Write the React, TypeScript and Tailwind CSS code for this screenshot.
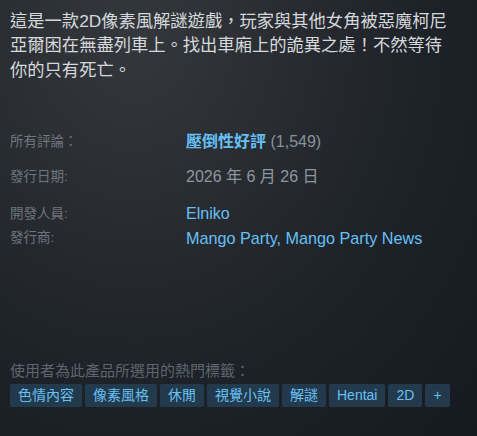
import React from "react";

const FONT = '"Liberation Sans", Arial, "Noto Sans CJK TC", sans-serif';

const tags = ["色情內容", "像素風格", "休閒", "視覺小說", "解謎", "Hentai", "2D", "+"];

export default function App() {
  return (
    <div
      className="w-[477px] h-[436px] overflow-hidden pl-[10px] bg-[radial-gradient(ellipse_at_28%_8%,#34383d_0%,#2a2e33_28%,#1d2128_62%,#151a21_100%)]"
      style={{ fontFamily: FONT }}
    >
      <div className="w-[443px] h-[83px] pt-[9px] text-[17.3px] leading-[24.4px] text-[#d6d9dc]">
        這是一款2D像素風解謎遊戲，玩家與其他女角被惡魔柯尼亞爾困在無盡列車上。找出車廂上的詭異之處！不然等待你的只有死亡。
      </div>

      <div className="mt-[49px] flex h-[20px] items-center">
        <div className="w-[176px] text-[13.5px] text-[#6f767d]">所有評論：</div>
        <div className="text-[16px]">
          <span className="font-bold text-[#66c0f4]">壓倒性好評</span>
          <span className="text-[#8a9198]"> (1,549)</span>
        </div>
      </div>

      <div className="mt-[15px] flex h-[20px] items-center">
        <div className="w-[176px] text-[13.5px] text-[#6f767d]">發行日期:</div>
        <div className="text-[16px] text-[#8f969c]">2026 年 6 月 26 日</div>
      </div>

      <div className="mt-[17px] flex h-[20px] items-center">
        <div className="w-[176px] text-[13.5px] text-[#6f767d]">開發人員:</div>
        <div className="text-[16px] text-[#66c0f4]">Elniko</div>
      </div>

      <div className="mt-[4px] flex h-[20px] items-center">
        <div className="w-[176px] text-[13.5px] text-[#6f767d]">發行商:</div>
        <div className="text-[16.2px] text-[#66c0f4]">Mango Party, Mango Party News</div>
      </div>

      <div className="mt-[113px] h-[20px] leading-[20px] text-[15px] text-[#5e656c]">
        使用者為此產品所選用的熱門標籤：
      </div>

      <div className="mt-[3px] flex gap-[3px]">
        {tags.map((t) => (
          <div
            key={t}
            className="flex h-[23px] items-center rounded-[2px] bg-[#233a4c] px-[8px] text-[14px] text-[#67c1f5]"
          >
            {t}
          </div>
        ))}
      </div>
    </div>
  );
}
